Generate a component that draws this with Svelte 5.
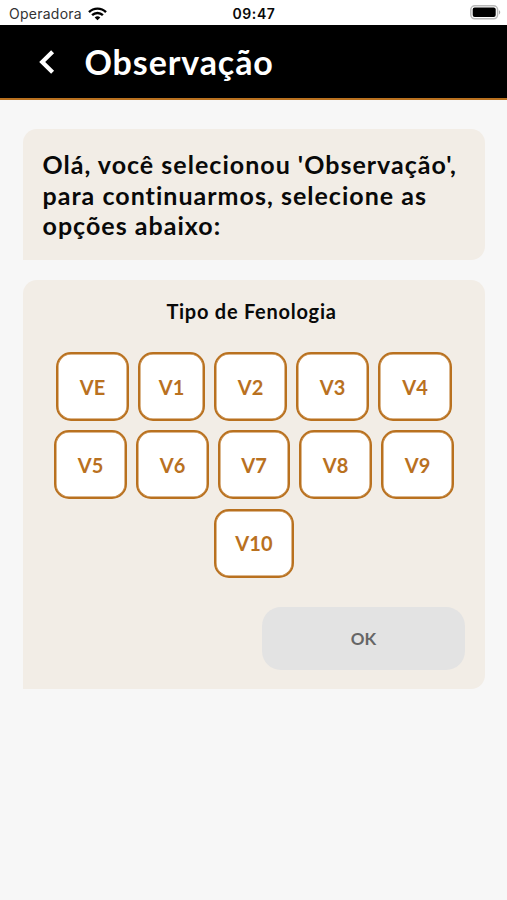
<script lang="ts">
  type Stage = { label: string; width: number };

  const rows: Stage[][] = [
    [
      { label: "VE", width: 73 },
      { label: "V1", width: 67 },
      { label: "V2", width: 73 },
      { label: "V3", width: 73 },
      { label: "V4", width: 74 },
    ],
    [
      { label: "V5", width: 73 },
      { label: "V6", width: 73 },
      { label: "V7", width: 72 },
      { label: "V8", width: 73 },
      { label: "V9", width: 73 },
    ],
    [{ label: "V10", width: 80 }],
  ];

  let selected = $state("");
</script>

<div class="screen">
  <div class="status">
    <div class="carrier">
      <span>Operadora</span>
      <svg width="19" height="14" viewBox="0 0 19 14" fill="none" stroke="#000" stroke-width="2.4">
        <path d="M1 5.1C5.7 0.4 13.3 0.4 18 5.1" />
        <path d="M4.1 8.2C7.1 5.3 11.9 5.3 14.9 8.2" />
        <path d="M6.7 10.4C8.3 9 10.7 9 12.3 10.4L9.5 13.2Z" fill="#000" stroke="none" />
      </svg>
    </div>
    <span class="time">09:47</span>
    <svg class="battery" width="31" height="15" viewBox="0 0 31 15">
      <rect x="0.8" y="0.8" width="26.8" height="13" rx="4" fill="#fff" stroke="#b9b9b9" stroke-width="1.5" />
      <rect x="2.7" y="2.6" width="23" height="9.4" rx="2" fill="#000" />
      <path d="M29 5.2C30.7 5.8 30.7 8.8 29 9.4Z" fill="#aaa" />
    </svg>
  </div>

  <header>
    <button class="back" aria-label="Voltar">
      <svg width="17" height="24" viewBox="0 0 17 24" fill="none" stroke="#fff" stroke-width="4.2">
        <path d="M14.6 1.8L4.2 12L14.6 22.2" />
      </svg>
    </button>
    <h1>Observação</h1>
  </header>

  <main>
    <section class="card message">
      Olá, você selecionou 'Observação',<br />
      para continuarmos, selecione as<br />
      opções abaixo:
    </section>

    <section class="card picker">
      <h2>Tipo de Fenologia</h2>
      <div class="stages">
        {#each rows as row}
          <div class="row">
            {#each row as stage}
              <button
                class="stage"
                class:active={selected === stage.label}
                style="width: {stage.width}px"
                onclick={() => (selected = stage.label)}
              >
                {stage.label}
              </button>
            {/each}
          </div>
        {/each}
      </div>
      <button class="ok" disabled={!selected}>OK</button>
    </section>
  </main>
</div>

<style>
  :global(body) {
    background: #f7f7f7;
  }
  .screen {
    width: 507px;
    height: 900px;
    background: #f7f7f7;
    color: #090909;
    font-family: Lato, "Open Sans", sans-serif;
    font-weight: 700;
    overflow: hidden;
  }
  button {
    font: inherit;
    padding: 0;
    border: none;
    box-sizing: border-box;
  }
  .status {
    display: grid;
    grid-template-columns: 1fr auto 1fr;
    align-items: center;
    height: 25px;
    padding: 2px 6px 0 9px;
    box-sizing: border-box;
    background: #fff;
    font-family: Inter, sans-serif;
    font-size: 14px;
    line-height: 23px;
  }
  .carrier {
    display: flex;
    align-items: center;
    gap: 6px;
    color: #333;
    font-weight: 400;
    letter-spacing: 0.25px;
  }
  .time {
    margin-right: 2px;
    font-weight: 600;
    letter-spacing: 0.6px;
  }
  .battery {
    justify-self: end;
    margin-top: -2px;
  }
  header {
    display: flex;
    align-items: center;
    height: 75px;
    padding-left: 38px;
    box-sizing: border-box;
    background: #000;
    border-bottom: 2px solid #b9711f;
  }
  .back {
    display: flex;
    background: none;
  }
  h1 {
    margin: 0 0 0 29.5px;
    color: #fff;
    font-size: 34px;
    font-weight: 700;
    line-height: 40px;
    letter-spacing: 0.9px;
  }
  main {
    display: flex;
    flex-direction: column;
    gap: 20px;
    padding: 29px 22px 0 23px;
  }
  .card {
    box-sizing: border-box;
    background: #f2ede6;
    border-radius: 14px 14px 14px 0;
  }
  .message {
    height: 131px;
    padding: 20px 0 0 19.5px;
    font-size: 25px;
    line-height: 30.5px;
    letter-spacing: 1.02px;
    white-space: nowrap;
  }
  .picker {
    display: flex;
    flex-direction: column;
    height: 409px;
    padding: 18px 20px 0;
  }
  h2 {
    margin: 0;
    padding-right: 5px;
    font-size: 20px;
    font-weight: 700;
    line-height: 26px;
    letter-spacing: 0.74px;
    text-align: center;
  }
  .stages {
    display: flex;
    flex-direction: column;
    gap: 9.3px;
    margin-top: 28px;
  }
  .row {
    display: flex;
    justify-content: center;
    gap: 9px;
  }
  .stage {
    height: 69px;
    border: 2px solid #b9711f;
    border-radius: 15px;
    background: #fff;
    box-shadow: inset 0 0 0 0.5px #b9711f;
    color: #b9711f;
    font-size: 20px;
    letter-spacing: 0.1px;
  }
  .stage.active {
    background: #b9711f;
    color: #fff;
  }
  .ok {
    align-self: flex-end;
    width: 203px;
    height: 63px;
    margin-top: 29px;
    border-radius: 19px;
    background: #b9711f;
    color: #fff;
    font-size: 17px;
  }
  .ok:disabled {
    background: #e3e3e3;
    color: #666;
  }
</style>
